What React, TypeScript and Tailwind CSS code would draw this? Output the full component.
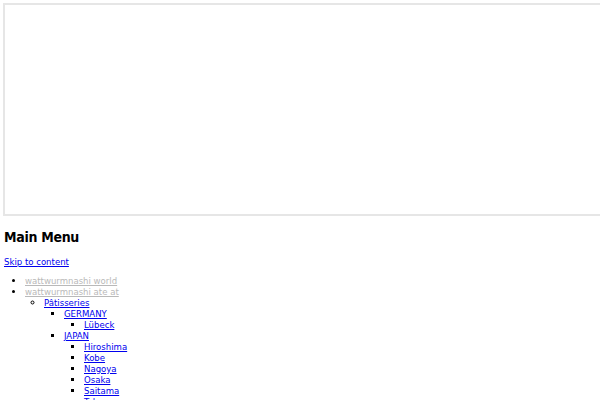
import React from "react";

const font = { fontFamily: '"DejaVu Sans Condensed", "DejaVu Sans", sans-serif' };

function L({ children, visited }: { children: React.ReactNode; visited?: boolean }) {
  return (
    <a href="#" className={visited ? "text-[#b9b9b9] underline" : "text-[#0000ee] underline"}>
      {children}
    </a>
  );
}

export default function App() {
  const cities = ["Hiroshima", "Kobe", "Nagoya", "Osaka", "Saitama", "Tokyo"];
  return (
    <div className="w-[600px] h-[400px] overflow-hidden bg-white text-black" style={font}>
      <div className="ml-[3px] mt-[3px] w-[640px] h-[213px] border-2 border-[#e6e6e6] bg-white" />
      <div className="px-[4px]">
        <h2 className="mt-[13px] text-[14px] leading-[17px] font-bold tracking-[-0.3px]">Main Menu</h2>
        <div className="mt-[10px] text-[9.5px] leading-[11px]">
          <L>Skip to content</L>
        </div>
        <ul className="mt-[8px] list-disc pl-[21px] text-[9.5px] leading-[11px]">
          <li><L visited>wattwurmnashi world</L></li>
          <li>
            <L visited>wattwurmnashi ate at</L>
            <ul className="list-[circle] pl-[19px]">
              <li>
                <L>Pâtisseries</L>
                <ul className="list-[square] pl-[20px]">
                  <li>
                    <L>GERMANY</L>
                    <ul className="list-[square] pl-[20px]">
                      <li><L>Lübeck</L></li>
                    </ul>
                  </li>
                  <li>
                    <L>JAPAN</L>
                    <ul className="list-[square] pl-[20px]">
                      {cities.map((c) => (
                        <li key={c}><L>{c}</L></li>
                      ))}
                    </ul>
                  </li>
                </ul>
              </li>
            </ul>
          </li>
        </ul>
      </div>
    </div>
  );
}
